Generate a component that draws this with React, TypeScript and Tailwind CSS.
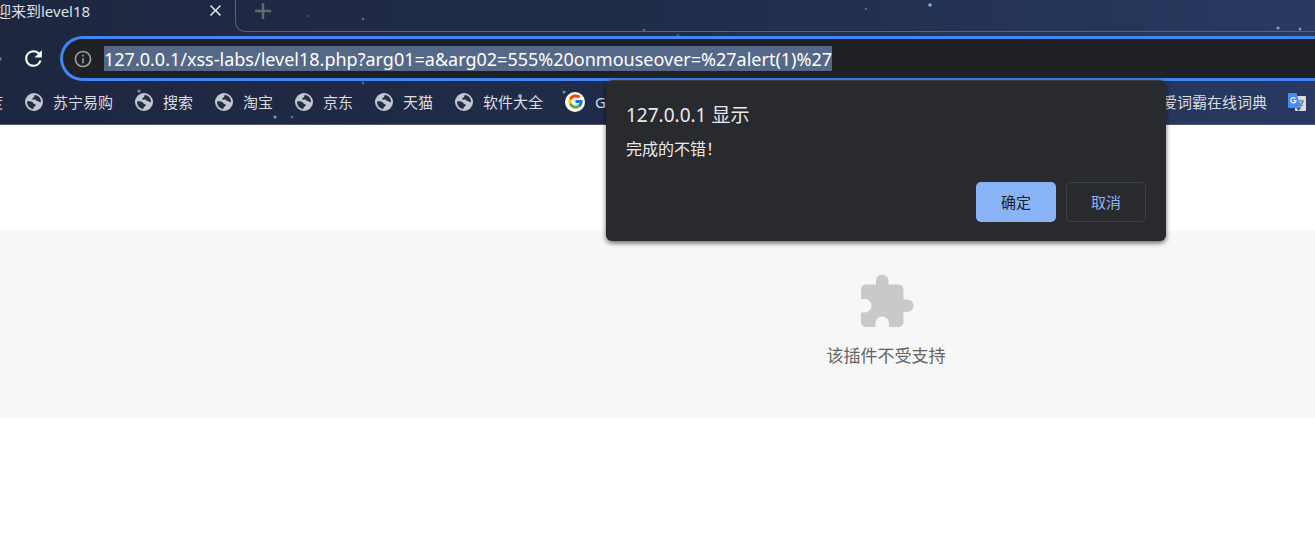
import React from 'react';
import { MdClose, MdRefresh, MdInfoOutline, MdExtension } from 'react-icons/md';
import { FcGoogle } from 'react-icons/fc';

const bookmarks = ['苏宁易购', '搜索', '淘宝', '京东', '天猫', '软件大全'];

const stars = [
  { x: 308, y: 16, r: 1, o: 0.3 },
  { x: 363, y: 19, r: 1.3, o: 0.5 },
  { x: 866, y: 9, r: 1.1, o: 0.5 },
  { x: 930, y: 5, r: 1.8, o: 0.85 },
  { x: 644, y: 30, r: 1.2, o: 0.5 },
  { x: 678, y: 35, r: 1.2, o: 0.35 },
  { x: 1278, y: 28, r: 1.6, o: 0.8 },
  { x: 1300, y: 29, r: 1.5, o: 0.7 },
  { x: 139, y: 91, r: 1.6, o: 0.7 },
  { x: 275, y: 117, r: 1.6, o: 0.75 },
  { x: 292, y: 117, r: 1.3, o: 0.5 },
  { x: 363, y: 83, r: 1.2, o: 0.5 },
  { x: 520, y: 96, r: 2, o: 0.8 },
  { x: 564, y: 92, r: 1.5, o: 0.7 },
];

const StarField: React.FC = () => (
  <svg className="absolute inset-0 w-full h-full pointer-events-none" aria-hidden="true">
    {stars.map((s) => (
      <circle key={`${s.x}-${s.y}`} cx={s.x} cy={s.y} r={s.r} fill="#9db8ec" opacity={s.o} />
    ))}
  </svg>
);

const GlobeIcon: React.FC = () => (
  <svg className="w-[18px] h-[18px] shrink-0" viewBox="0 0 18 18" aria-hidden="true">
    <circle cx="9" cy="9" r="9" fill="#c3c7cd" />
    <path d="M9.5 2C13.200 2.200 16 5 16 8.800c-.9.700-1.800.300-2.300-.400-.7-.9-1.300-.2-2.200-.6-.8-.4-.3-1.200-1.200-1.400-.9-.2-1.600.6-2.600.2-.8-.4-.5-1.500.4-1.900.8-.3 1.300-.6 1.400-2.700z" fill="#222d49" />
    <path d="M2 8.400c1.800-.3 4.400-.1 5.600.9.8.7.6 1.400 1.700 1.600 1.200.2 1.600.8 1.300 1.700-.3 1-1.600.8-1.900 1.600-.2.700-.1 1.200-.5 1.700C4.600 15.600 1.900 12.400 2 8.400z" fill="#222d49" />
  </svg>
);

const PlusIcon: React.FC = () => (
  <svg className="w-[22px] h-[22px]" viewBox="0 0 22 22" aria-hidden="true">
    <path d="M11 3v16M3 11h16" stroke="currentColor" strokeWidth="2.4" fill="none" />
  </svg>
);

const TranslateIcon: React.FC = () => (
  <svg className="w-5 h-5 shrink-0" viewBox="0 0 20 20" aria-hidden="true">
    <rect x="8" y="4" width="11" height="15" rx="1" fill="#dcdcdc" />
    <path d="M11 9h6M14 7.5V9M16 9c-.5 2.5-2 4-4 5M12.5 10.5c.8 2 2 3 3.500 3.500" stroke="#6b7680" strokeWidth="1.2" fill="none" />
    <path d="M9.5 16H14l-2.5 3z" fill="#3a53c5" />
    <path d="M2 1h7.5L14 16H2a1 1 0 0 1-1-1V2a1 1 0 0 1 1-1z" fill="#4a8af4" />
    <path d="M8.3 6.5A2.6 2.6 0 1 0 9 8.6H6.5" stroke="#e8f0fe" strokeWidth="1.3" fill="none" />
  </svg>
);

const TabStrip: React.FC = () => (
  <div className="flex h-8">
    <div className="w-[235px] shrink-0 flex items-start justify-between pr-2.5">
      <span className="-ml-1 text-[15px] leading-[22px] whitespace-nowrap text-[#dfe1e5]">迎来到level18</span>
      <button aria-label="关闭标签页" className="mt-px text-[#e4e6ea]">
        <MdClose size={19} />
      </button>
    </div>
    <div className="flex-1 border-l border-b border-[#5f6166] rounded-bl-[10px] pl-4">
      <button aria-label="新标签页" className="text-[#66686d]">
        <PlusIcon />
      </button>
    </div>
  </div>
);

const Toolbar: React.FC = () => (
  <div className="flex items-center h-[53px] py-1">
    <div className="w-[60px] shrink-0 flex items-center justify-between pr-3.5">
      {/* tip of the forward arrow */}
      <svg className="w-1 h-2" viewBox="0 0 4 8" aria-hidden="true">
        <path d="M0 2l2 2-2 2z" fill="#7c8190" />
      </svg>
      <button aria-label="重新加载" className="text-white">
        <MdRefresh size={25} />
      </button>
    </div>
    <div className="flex-1 h-[45px] flex items-center pl-2.5 bg-[#202124] border-3 border-r-0 border-[#4285f4] rounded-l-full overflow-hidden">
      <MdInfoOutline size={20} className="text-[#9aa0a6] shrink-0" />
      <input
        type="text"
        aria-label="地址栏"
        readOnly
        value="127.0.0.1/xss-labs/level18.php?arg01=a&arg02=555%20onmouseover=%27alert(1)%27"
        className="ml-[11px] h-[25px] [field-sizing:content] bg-[#566888] text-white text-[18px] leading-6 outline-none"
      />
    </div>
  </div>
);

const BookmarkBar: React.FC = () => (
  <nav className="flex items-center justify-between h-10 pb-1.5 border-b border-[#56557c] text-[15px] leading-5 text-[#dcdee2] whitespace-nowrap">
    <div className="flex items-center gap-[22px]">
      <a href="#" className="-ml-3">度</a>
      {bookmarks.map((name) => (
        <a key={name} href="#" className="flex items-center gap-2.5">
          <GlobeIcon />
          {name}
        </a>
      ))}
      <a href="#" className="flex items-center gap-2.5">
        <span className="w-5 h-5 flex items-center justify-center rounded-full bg-white">
          <FcGoogle size={17} />
        </span>
        G
      </a>
    </div>
    <div className="flex items-center gap-5 pr-2">
      <a href="#">爱词霸在线词典</a>
      <a href="#" aria-label="翻译">
        <TranslateIcon />
      </a>
    </div>
  </nav>
);

const AlertDialog: React.FC = () => (
  <div
    role="dialog"
    aria-labelledby="dialog-title"
    className="absolute left-[606px] top-20 w-[560px] p-5 pb-[19px] bg-[#292a2d] rounded-md border-t border-[#3c3d41] shadow-[0_2px_5px_rgba(0,0,0,0.6)]"
  >
    <h2 id="dialog-title" className="text-[19px] leading-7 text-[#e8eaed]">127.0.0.1 显示</h2>
    <p className="mt-2 text-[16px] leading-6 text-[#e8eaed]">完成的不错！</p>
    <div className="mt-[21px] flex justify-end gap-2.5 text-[15px]">
      <button className="w-20 h-10 rounded-[5px] bg-[#8ab4f8] text-[#202124]">确定</button>
      <button className="w-20 h-10 rounded-[5px] border border-[#3c4043] text-[#8ab4f8]">取消</button>
    </div>
  </div>
);

const App: React.FC = () => {
  return (
    <div className="relative min-h-screen bg-white overflow-hidden font-['Noto_Sans','Noto_Sans_CJK_SC',sans-serif]">
      {/* Browser chrome */}
      <header className="relative bg-linear-to-r from-[#1e2740] via-[#202c49] to-[#283a62]">
        <StarField />
        <TabStrip />
        <Toolbar />
        <BookmarkBar />
      </header>

      {/* Page content */}
      <main className="pt-[106px]">
        <div className="h-[187px] pl-[457px] pb-2.5 flex flex-col items-center justify-center bg-[#f7f7f7]">
          <MdExtension size={60} className="text-[#c9c9c9]" />
          <p className="mt-3 text-[17px] leading-6 text-[#646464]">该插件不受支持</p>
        </div>
      </main>

      <AlertDialog />
    </div>
  );
};

export default App;
